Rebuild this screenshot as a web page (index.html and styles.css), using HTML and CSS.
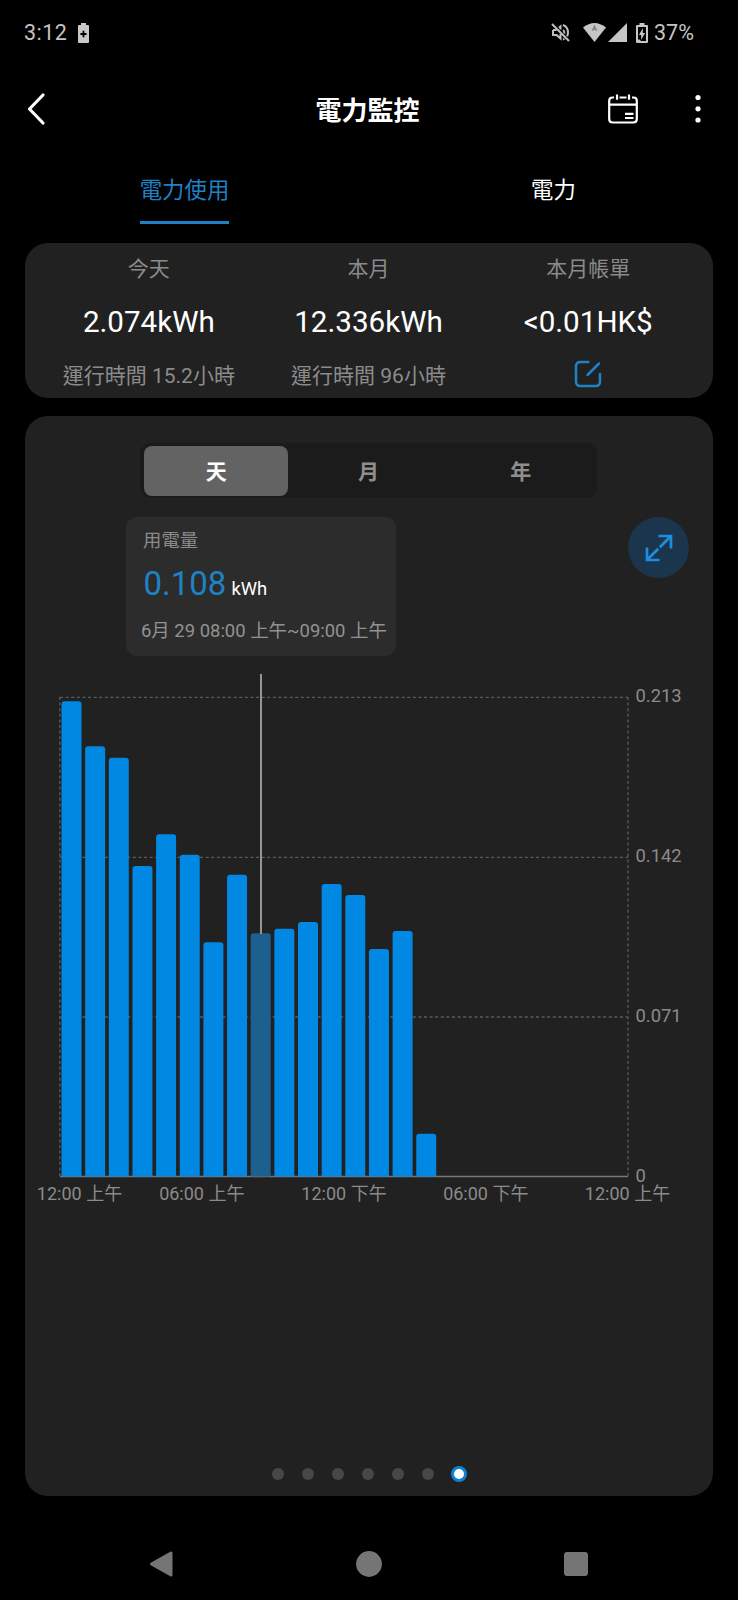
FILE: index.html
```html
<!DOCTYPE html>
<html lang="zh-Hant-HK">
<head>
<meta charset="utf-8">
<title>電力監控</title>
<link rel="stylesheet" href="styles.css">
</head>
<body>
<div class="phone">
  <div class="status">
    <span class="clock">3:12</span>
    <svg class="saver" width="11" height="20" viewBox="0 0 11 20"><path fill="#c9c9c9" fill-rule="evenodd" d="M3 0h5v2h2q1 0 1 1v16q0 1-1 1H1q-1 0-1-1V3q0-1 1-1h2zM4.6 7.8v2.3H2.4v1.9h2.2v2.3h1.8V12h2.2v-1.9H6.4V7.8z"/></svg>
    <svg class="mute" width="19" height="19" viewBox="0 0 19 19" fill="none" stroke="#bdbdbd" stroke-width="2"><path d="M1 1l17 17M2 7v5h3.5l4 3.5V11M9.5 6.500V3.500L8 4.800M5.500 7H2M12 7q1.500 1 1.500 3.500M12 2q5 2 5 7.500 0 2-1 3.800M12 16.500l1.500-.6"/></svg>
    <svg class="wifi" width="23" height="19" viewBox="0 0 23 19"><path fill="#c6c6c6" d="M0 4.500Q11.500-4.500 23 4.500L11.500 19z"/><path fill="#888" d="M11.500 1.500l3 6.500-3-1-3 1z"/></svg>
    <svg class="signal" width="19" height="19" viewBox="0 0 19 19"><path fill="#c6c6c6" d="M19 0v19H0z"/></svg>
    <svg class="battery" width="12" height="20" viewBox="0 0 12 20"><path fill="#c6c6c6" fill-rule="evenodd" d="M3.500 0h5v2H11q1 0 1 1v16q0 1-1 1H1q-1 0-1-1V3q0-1 1-1h2.500zM2 4v12.500h1.500L5 18h5V4zM6.800 5v5H9l-3.800 7v-5H3z"/></svg>
    <span class="percent">37%</span>
  </div>

  <div class="header">
    <svg class="back" width="20" height="34" viewBox="0 0 20 34"><path d="M17 3L3.500 17 17 31" fill="none" stroke="#fff" stroke-width="3.200" stroke-linecap="round" stroke-linejoin="round"/></svg>
    <h1 class="title">電力監控</h1>
    <div class="actions">
      <svg width="30" height="30" viewBox="0 0 30 30" fill="none" stroke="#fff" stroke-width="2.200"><path d="M6 3.500H4.500q-3.300 0-3.300 3.300V25q0 3.500 3.500 3.500h20.600q3.500 0 3.500-3.500V6.800q0-3.300-3.300-3.300H24M11.500 3.500h7M1.200 10.700h27.600M9 .5v5.200M21 .5v5.200M17 19.800h8.500M17 24h8.500"/></svg>
      <svg width="6" height="30" viewBox="0 0 6 30" fill="#fff"><circle cx="3" cy="3.500" r="2.600"/><circle cx="3" cy="14.800" r="2.600"/><circle cx="3" cy="26" r="2.600"/></svg>
    </div>
  </div>

  <div class="tabs">
    <div class="tab tab-active"><span>電力使用</span></div>
    <div class="tab"><span>電力</span></div>
  </div>

  <div class="summary">
    <div class="stat"><span class="stat-label">今天</span><span class="stat-value">2.074kWh</span><span class="stat-note">運行時間 15.2小時</span></div>
    <div class="stat"><span class="stat-label">本月</span><span class="stat-value">12.336kWh</span><span class="stat-note">運行時間 96小時</span></div>
    <div class="stat"><span class="stat-label">本月帳單</span><span class="stat-value">&lt;0.01HK$</span>
      <span class="stat-note"><svg class="edit" width="28" height="28" viewBox="0 0 28 28" fill="none" stroke="#1f82c4" stroke-width="2.500" stroke-linecap="round"><path d="M14.500 2H6.500Q2 2 2 6.500v15Q2 26 6.500 26h15q4.500 0 4.500-4.500V14M13.500 15L25 3.500"/></svg></span></div>
  </div>

  <div class="panel">
    <div class="segments">
      <div class="segment segment-active">天</div>
      <div class="segment">月</div>
      <div class="segment">年</div>
    </div>
    <div class="info-row">
      <div class="reading">
        <div class="reading-label">用電量</div>
        <div class="reading-value">0.108<span class="unit">kWh</span></div>
        <div class="reading-time">6月 29 08:00 上午~09:00 上午</div>
      </div>
      <div class="expand">
        <svg width="30" height="30" viewBox="0 0 30 30" fill="none" stroke="#1b8ee0" stroke-width="2.700"><path d="M14.500 3H27V15.500M27 3L15.800 14.200M3 14.500V27H15.500M3 27L14.200 15.800"/></svg>
      </div>
    </div>

    <svg class="chart" width="688" height="550" viewBox="25 660 688 550">
      <g class="grid">
        <path d="M60 697.300H628M60 857.300H628M60 1017H628M59.800 697V1176M628 697V1176"/>
      </g>
      <path class="axis" d="M60 1176.500H628"/>
      <g class="bars">
        <path d="M61.500 1176.500V704.300q0-3 3-3h14q3 0 3 3V1176.500z"/>
        <path d="M85.150 1176.500V749.300q0-3 3-3h14q3 0 3 3V1176.500z"/>
        <path d="M108.800 1176.500V760.700q0-3 3-3h14q3 0 3 3V1176.500z"/>
        <path d="M132.450 1176.500V869q0-3 3-3h14q3 0 3 3V1176.500z"/>
        <path d="M156.100 1176.500V837.200q0-3 3-3h14q3 0 3 3V1176.500z"/>
        <path d="M179.750 1176.500V857.700q0-3 3-3h14q3 0 3 3V1176.500z"/>
        <path d="M203.400 1176.500V945.300q0-3 3-3h14q3 0 3 3V1176.500z"/>
        <path d="M227.050 1176.500V877.700q0-3 3-3h14q3 0 3 3V1176.500z"/>
        <path class="picked" d="M250.700 1176.500V936.300q0-3 3-3h14q3 0 3 3V1176.500z"/>
        <path d="M274.350 1176.500V931.800q0-3 3-3h14q3 0 3 3V1176.500z"/>
        <path d="M298 1176.500V925q0-3 3-3h14q3 0 3 3V1176.500z"/>
        <path d="M321.650 1176.500V887q0-3 3-3h14q3 0 3 3V1176.500z"/>
        <path d="M345.300 1176.500V898q0-3 3-3h14q3 0 3 3V1176.500z"/>
        <path d="M368.950 1176.500V952q0-3 3-3h14q3 0 3 3V1176.500z"/>
        <path d="M392.600 1176.500V934q0-3 3-3h14q3 0 3 3V1176.500z"/>
        <path d="M416.250 1176.500V1136.800q0-3 3-3h14q3 0 3 3V1176.500z"/>
      </g>
      <path class="cursor" d="M261 674V934"/>
      <g class="labels">
        <text x="635.500" y="702">0.213</text>
        <text x="635.500" y="862">0.142</text>
        <text x="635.500" y="1022">0.071</text>
        <text x="635.500" y="1182">0</text>
      </g>
      <g class="labels times">
        <text x="79.500" y="1200">12:00 上午</text>
        <text x="201.800" y="1200">06:00 上午</text>
        <text x="344" y="1200">12:00 下午</text>
        <text x="485.800" y="1200">06:00 下午</text>
        <text x="627.500" y="1200">12:00 上午</text>
      </g>
    </svg>

    <div class="dots"><i></i><i></i><i></i><i></i><i></i><i></i><i class="current"></i></div>
  </div>

  <div class="navbar">
    <svg width="24" height="28" viewBox="0 0 24 28"><path d="M22 3v22L2.500 14z" fill="#757575" stroke="#757575" stroke-width="3" stroke-linejoin="round"/></svg>
    <svg width="26" height="26" viewBox="0 0 26 26"><circle cx="13" cy="13" r="12.900" fill="#757575"/></svg>
    <svg width="24" height="24" viewBox="0 0 24 24"><rect width="24" height="24" rx="3" fill="#757575"/></svg>
  </div>
</div>
</body>
</html>
```

FILE: styles.css
```css
* { box-sizing: border-box; }

body {
  margin: 0;
  background: #000;
  color: #fff;
  font-family: Roboto, "Noto Sans CJK TC", sans-serif;
}

svg { display: block; flex: none; }

.phone {
  width: 738px;
  height: 1600px;
  display: flex;
  flex-direction: column;
  overflow: hidden;
}

.status {
  height: 66px;
  padding: 0 42px 1px 24px;
  display: flex;
  align-items: center;
  color: #c4c4c4;
  font-size: 21.500px;
}
.clock { width: 54px; letter-spacing: .5px; }
.mute { margin-left: auto; }
.wifi { margin-left: 13px; }
.signal { margin-left: 2px; }
.battery { margin-left: 9px; }
.percent { width: 42px; margin-left: 6px; }

.header {
  height: 86px;
  padding: 0 37px 0 26px;
  display: grid;
  grid-template-columns: 1fr auto 1fr;
  align-items: center;
}
.title {
  margin: 0;
  padding: 3px 0 0 8px;
  font-size: 26px;
  line-height: 38px;
  font-weight: 700;
}
.actions {
  display: flex;
  justify-content: flex-end;
  gap: 57px;
}

.tabs { display: flex; height: 91px; padding-top: 16px; }
.tab { flex: 1; text-align: center; font-size: 22.400px; }
.tab span { display: inline-block; height: 56px; line-height: 44px; }
.tab-active { color: #1f82c4; }
.tab-active span { border-bottom: 3px solid #1f82c4; }

.summary {
  height: 155px;
  margin: 0 25px;
  padding: 0 15px 0 14px;
  display: flex;
  background: #212121;
  border-radius: 23px;
}
.stat {
  flex: 1;
  display: flex;
  flex-direction: column;
  align-items: center;
  white-space: nowrap;
}
.stat-label, .stat-note { font-size: 21px; color: #8b8b8b; }
.stat-label { height: 52px; line-height: 52px; }
.stat-value { height: 54px; line-height: 54px; font-size: 29.600px; }
.stat-note { height: 49px; line-height: 54px; }
.edit { margin-top: 11px; }

.panel {
  height: 1080px;
  margin: 18px 25px 0;
  display: flex;
  flex-direction: column;
  background: #212121;
  border-radius: 23px;
}
.segments {
  width: 457px;
  height: 55px;
  margin: 27px 0 0 115px;
  display: flex;
  background: #1b1b1b;
  border-radius: 11px;
}
.segment {
  flex: 1;
  margin: 2.500px 4px;
  border-radius: 8px;
  line-height: 53px;
  text-align: center;
  font-size: 21px;
  font-weight: 700;
  color: #8f8f8f;
}
.segment-active { background: #636363; color: #fff; }

.info-row {
  margin-top: 19px;
  padding: 0 24px 0 101px;
  display: flex;
  justify-content: space-between;
}
.reading {
  width: 270px;
  height: 139px;
  padding: 0 0 0 15px;
  background: #2c2c2c;
  border-radius: 11px;
  white-space: nowrap;
}
.reading-label { padding-left: 2px; height: 46px; line-height: 48px; font-size: 18.400px; color: #8b8b8b; }
.reading-value { padding-left: 2.500px; height: 44px; line-height: 41px; font-size: 33px; color: #1f82c4; }
.unit { margin-left: 5px; font-size: 18.400px; color: #fff; }
.reading-time { line-height: 49px; font-size: 18.450px; color: #929292; }
.expand {
  width: 61px;
  height: 61px;
  display: grid;
  place-items: center;
  background: #1b354c;
  border-radius: 50%;
}

.chart { margin-top: 4px; }
.grid { fill: none; stroke: #5b5b5b; stroke-width: 1.300; stroke-dasharray: 3 2.600; }
.axis { stroke: #777; stroke-width: 1.500; }
.bars { fill: #0088e2; }
.picked { fill: #1b608f; }
.cursor { stroke: #969696; stroke-width: 2; }
.labels { font-size: 18.400px; fill: #8b8b8b; }
.times { text-anchor: middle; font-size: 18px; }

.dots {
  margin: auto 0 14.500px 246.500px;
  display: flex;
  align-items: center;
  gap: 18.100px;
}
.dots i { width: 12px; height: 12px; border-radius: 50%; background: #474747; }
.dots .current { width: 16px; height: 16px; margin-left: -1px; background: #fff; border: 3px solid #0e83d2; }

.navbar {
  flex: 1;
  padding: 31px 150px 0 149px;
  display: flex;
  justify-content: space-between;
  align-items: center;
}
```
